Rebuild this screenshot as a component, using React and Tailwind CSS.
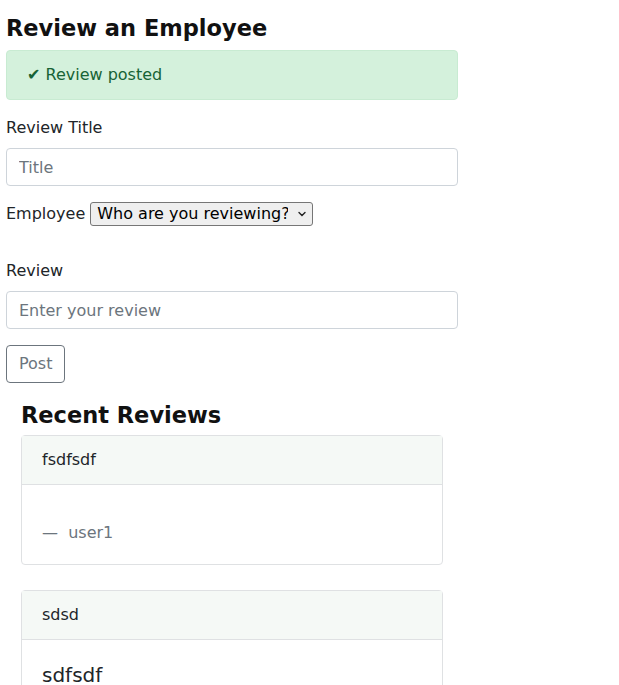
import { useState } from 'react';

const reviews = [
  { title: 'fsdfsdf', body: '', author: 'user1' },
  { title: 'sdsd', body: 'sdfsdf', author: 'user1' },
];

const ReviewCard = ({ review }) => (
  <div className="mb-[25px] w-[422px] rounded-[4px] border border-[#dfe1e3] bg-white">
    <div className="border-b border-[#dfe1e3] bg-[#f5f9f6] px-5 py-3 leading-6">{review.title}</div>
    {review.body ? (
      <div className="px-5 pt-5 pb-5">
        <p className="mb-4 text-[20px] leading-[30px]">{review.body}</p>
        <div className="text-[16px] leading-6 text-[#6c757d]">— &nbsp;{review.author}</div>
      </div>
    ) : (
      <div className="px-5 pt-[36px] pb-[19px]">
        <div className="text-[16px] leading-6 text-[#6c757d]">— &nbsp;{review.author}</div>
      </div>
    )}
  </div>
);

export default function App() {
  const [title, setTitle] = useState('');
  const [review, setReview] = useState('');

  return (
    <div className="min-h-[685px] bg-white px-[6px] pt-[15px] text-[16px] leading-6 text-[#212529] [font-family:'DejaVu_Sans',sans-serif]">
      <div className="w-[452px]">
        <h2 className="mb-2 text-[22.5px] font-bold leading-[27px] text-[#111]">Review an Employee</h2>

        <div className="mb-4 rounded-[4px] border border-[#c8ebd2] bg-[#d4f1dc] px-5 py-3 text-[#176335]">
          ✔ Review posted
        </div>

        {/* form */}
        <label className="mb-2 block">Review Title</label>
        <input
          value={title}
          onChange={(e) => setTitle(e.target.value)}
          placeholder="Title"
          className="mb-4 block h-[38px] w-full rounded-[4px] border border-[#ced4da] px-3 placeholder:text-[#6c757d]"
        />

        <div className="mb-8 flex h-6 items-center gap-[5px]">
          <span>Employee</span>
          <div className="relative">
            <select className="block h-6 w-[223px] appearance-none rounded-[3px] border border-[#767676] bg-[#efefef] pl-[6px] pr-6 text-[16px] leading-[22px] text-black">
              <option>Who are you reviewing?</option>
              <option>user1</option>
            </select>
            <svg
              className="pointer-events-none absolute right-[7px] top-[9px]"
              width="8"
              height="6"
              viewBox="0 0 8 6"
              fill="none"
            >
              <path d="M1 1.5 4 4.5 7 1.5" stroke="#222" strokeWidth="1.4" strokeLinecap="round" />
            </svg>
          </div>
        </div>

        <label className="mb-2 block pt-px">Review</label>
        <input
          value={review}
          onChange={(e) => setReview(e.target.value)}
          placeholder="Enter your review"
          className="mb-4 block h-[38px] w-full rounded-[4px] border border-[#ced4da] px-3 placeholder:text-[#6c757d]"
        />

        <button className="h-[38px] rounded-[4px] border border-[#6c757d] px-3 text-[#6c757d]">Post</button>
      </div>

      <div className="pl-[15px]">
        <h2 className="mt-[19px] mb-[6px] text-[22.5px] font-bold leading-[27px] text-[#111]">Recent Reviews</h2>
        {reviews.map((r, i) => (
          <ReviewCard key={i} review={r} />
        ))}
      </div>
    </div>
  );
}
